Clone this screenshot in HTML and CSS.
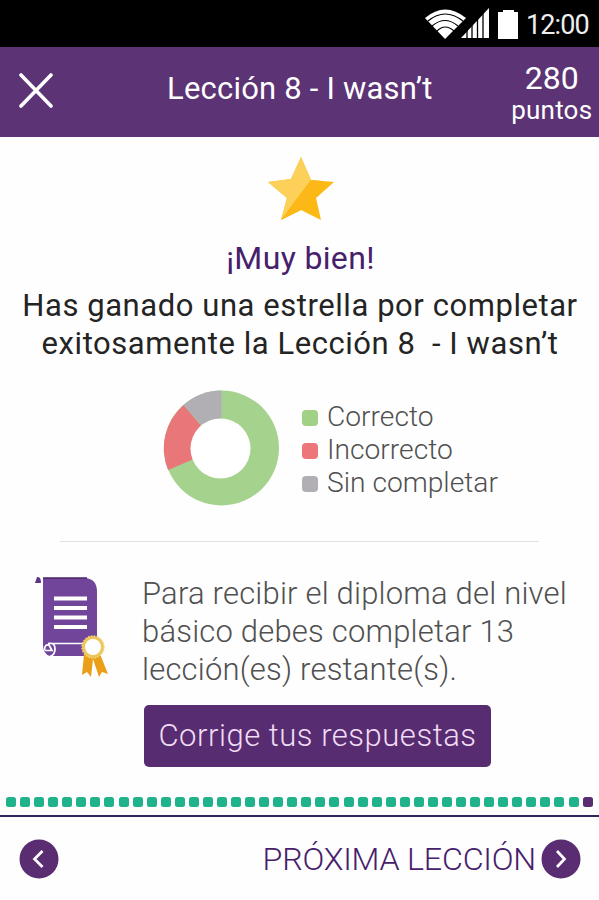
FILE: index.html
```html
<!DOCTYPE html>
<html lang="es">
<head>
<meta charset="utf-8">
<title>Lección 8</title>
<link rel="stylesheet" href="styles.css">
</head>
<body>
<div class="status">
  <svg class="status-icons" width="122" height="47" viewBox="0 0 122 47">
    <path d="M44 39L24 18Q44 1 65 18Z" fill="#fff"/>
    <g fill="none" stroke="#000" stroke-width="1.1"><path d="M27 21Q44 7 62 21M31 26Q44 15 57 26M36 31Q44 23 53 31"/></g>
    <path d="M60 38L88 8V38Z" fill="#fff"/>
    <path d="M66 30V38M71 24V38M76.500 18V38M82 12V38" stroke="#000" stroke-width="1.300"/>
    <path d="M97 12H102V10H113V12H117V39H97Z" fill="#fff"/>
  </svg>
  <span class="clock">12:00</span>
</div>
<header class="bar">
  <svg class="close" width="36" height="36" viewBox="0 0 36 36"><path d="M3 3L33 34M33 3L3 34" fill="none" stroke="#fff" stroke-width="3.600" stroke-linecap="round"/></svg>
  <h1 class="title">Lección 8 - I wasn’t</h1>
  <div class="points"><span class="num">280</span><span class="unit">puntos</span></div>
</header>
<main class="content">
  <svg class="star" width="68" height="64" viewBox="0 0 68 64">
    <path d="M34 0L44 23L67 25L49 41L54 63L34 53L14 63L20 41L1 25L24 22Z" fill="#fdb913"/>
    <path d="M34 0L44 23L14 63L20 41L1 25L24 22Z" fill="#fdd05a"/>
    <path d="M44 23L14 63L34 53L55 24Z" fill="#fbb818"/>
  </svg>
  <h2 class="praise">¡Muy bien!</h2>
  <p class="message"><span>Has ganado una estrella por completar</span><span>exitosamente la Lección 8&nbsp; - I wasn’t</span></p>
  <section class="results">
    <svg class="donut" width="116" height="116" viewBox="0 0 116 116">
      <circle cx="58.500" cy="58" r="57.500" fill="#a5d38e"/>
      <path d="M57 58L5 80A57.500 57.500 0 0 1 20.500 15Z" fill="#e9777a"/>
      <path d="M58.500 58L20.500 15A57.500 57.500 0 0 1 58.500 .5Z" fill="#b2afb4"/>
      <circle cx="57.500" cy="58.500" r="30" fill="#fff"/>
    </svg>
    <ul class="legend">
      <li><i class="sw green"></i><span>Correcto</span></li>
      <li><i class="sw red"></i><span>Incorrecto</span></li>
      <li><i class="sw gray"></i><span>Sin completar</span></li>
    </ul>
  </section>
  <hr class="rule">
  <section class="diploma">
    <svg class="scroll" width="76" height="106" viewBox="0 0 76 106">
      <path d="M8 3H49Q62 3 62 17V67H64V81H15Q8 79 8 70Z" fill="#70459a"/>
      <path d="M0 8L2 2Q6 1 6 8Z" fill="#5d3685"/>
      <path d="M8 3H52" stroke="#482468" stroke-width="1.500"/>
      <path d="M19 23.500H52M19 33H52M19 42.500H52M19 52H52" stroke="#fff" stroke-width="3.800"/>
      <path d="M13 68.500H62M13 68.500Q20 67 20 74Q20 80 15 81.500M9.500 75Q9.500 69 14 70L17 75.500H9.500" fill="none" stroke="#fff" stroke-width="1.700"/>
      <path d="M49 79L47 100L52 97L56 102L58 84L64 102L67 97L73 99L65 79Z" fill="#e9a018"/>
      <circle cx="58" cy="72" r="9.500" fill="#fff" stroke="#edc65b" stroke-width="3"/>
      <circle cx="58" cy="72" r="11" fill="none" stroke="#f3d47c" stroke-width="1.500" stroke-dasharray="1.500 1.400"/>
    </svg>
    <div class="diploma-body">
      <p class="info"><span>Para recibir el diploma del nivel</span><span>básico debes completar 13</span><span>lección(es) restante(s).</span></p>
      <button class="fix"><span>Corrige tus respuestas</span></button>
    </div>
  </section>
</main>
<div class="progress">
  <i></i><i></i><i></i><i></i><i></i><i></i><i></i><i></i><i></i><i></i><i></i><i></i><i></i><i></i><i></i><i></i><i></i><i></i><i></i><i></i><i></i><i></i><i></i><i></i><i></i><i></i><i></i><i></i><i></i><i></i><i></i><i></i><i></i><i></i><i></i><i></i><i></i><i></i><i></i><i></i><i></i><i class="now"></i>
</div>
<footer class="nav">
  <svg width="40" height="40" viewBox="0 0 40 40"><circle cx="20" cy="20" r="19.500" fill="#5a2d73"/><path d="M23.500 12L15.500 20L23.500 28" fill="none" stroke="#fff" stroke-width="2.700"/></svg>
  <span class="next"><span class="next-label">PRÓXIMA LECCIÓN</span><svg width="40" height="40" viewBox="0 0 40 40"><circle cx="20" cy="20" r="19.500" fill="#5a2d73"/><path d="M16 12L23.500 20L16 28" fill="none" stroke="#fff" stroke-width="2.700"/></svg></span>
</footer>
</body>
</html>
```
FILE: styles.css
```css
* { box-sizing: border-box; margin: 0; padding: 0; }
body { width: 599px; height: 900px; overflow: hidden; background: #fefefe; font-family: Roboto, "Liberation Sans", sans-serif; display: flex; flex-direction: column; }
svg { display: block; flex: none; }
span { white-space: nowrap; }
.status { height: 47px; flex: none; background: #000; display: flex; align-items: center; padding-left: 401px; }
.clock { color: #eee; font-size: 27px; line-height: 47px; margin-left: 3px; padding-top: 3px; letter-spacing: -0.9px; }
.bar { height: 90px; flex: none; background: #5c3374; color: #fff; display: flex; padding-left: 18px; }
.close { margin-top: 25px; }
.title { font-weight: 400; font-size: 31px; letter-spacing: 0.2px; line-height: 36px; margin: 24px 0 0 113px; width: 266px; white-space: nowrap; }
.points { width: 96px; margin-left: 72px; display: flex; flex-direction: column; align-items: center; padding-top: 13px; }
.num { font-size: 32px; line-height: 36px; }
.unit { font-size: 26px; line-height: 28px; letter-spacing: 0.2px; }
.content { height: 660px; flex: none; display: flex; flex-direction: column; align-items: center; }
.star { margin: 20px 0 0 2px; }
.praise { font-weight: 400; font-size: 32px; letter-spacing: 0.35px; line-height: 38px; color: #47206c; margin-top: 18px; padding-left: 2px; }
.message { display: flex; flex-direction: column; align-items: center; font-size: 31px; letter-spacing: 0.56px; line-height: 38px; color: #242424; margin-top: 10px; padding-left: 1px; }
.results { width: 599px; display: flex; padding-left: 163px; margin-top: 27px; }
.legend { list-style: none; margin: 10px 0 0 23px; }
.legend li { display: flex; align-items: center; height: 33px; font-size: 28.2px; font-weight: 300; color: #505050; line-height: 33px; gap: 9px; }
.sw { width: 16px; height: 16px; border-radius: 4px; margin-top: 3px; }
.green { background: #a0d184; }
.red { background: #ed767b; }
.gray { background: #b2afb4; }
.rule { width: 479px; border: 0; border-top: 1px solid #e2e2e2; margin-top: 35px; }
.diploma { width: 599px; display: flex; padding-left: 35px; margin-top: 33px; }
.diploma-body { margin-left: 31px; }
.info { display: flex; flex-direction: column; align-items: flex-start; font-size: 31px; letter-spacing: 0.2px; line-height: 38px; font-weight: 300; color: #505050; }
.fix { display: block; width: 347px; height: 62px; margin: 16px 0 0 2px; border: 0; border-radius: 5px; background: #582c70; color: #f0dcf4; font: 300 31px/60px Roboto, sans-serif; letter-spacing: 0.52px; }
.progress { height: 18px; flex: none; padding: 0 6px; display: flex; justify-content: space-between; }
.progress i { width: 10px; height: 10px; border-radius: 2.500px; background: #20b38b; }
.progress .now { background: #5a2d73; }
.nav { height: 85px; flex: none; border-top: 2px solid #33265f; display: flex; justify-content: space-between; align-items: center; padding: 0 18px 0 19px; }
.next { display: flex; align-items: center; gap: 5px; }
.next-label { font-size: 32.2px; letter-spacing: -0.2px; font-weight: 300; color: #47206c; }
```
